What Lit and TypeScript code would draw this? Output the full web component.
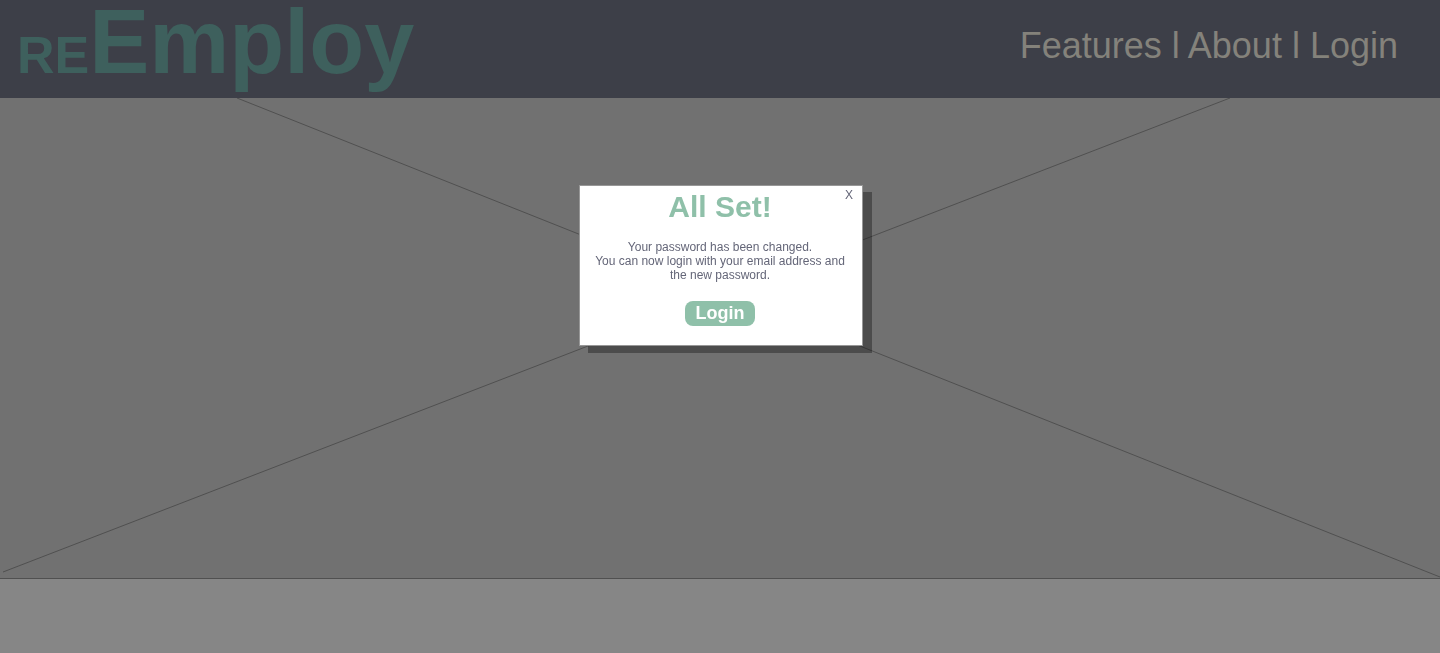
import { LitElement, html, css } from "lit";
import { customElement, state } from "lit/decorators.js";

@customElement("site-header")
class SiteHeader extends LitElement {
  static styles = css`
    :host {
      display: block;
    }
    .bar {
      display: flex;
      justify-content: space-between;
      align-items: flex-start;
      height: 98px;
      box-sizing: border-box;
      padding: 0 42px 0 17px;
      background: #3d3f48;
    }
    .logo {
      color: #3e605d;
      font-size: 90px;
      font-weight: bold;
      line-height: 84px;
      text-decoration: none;
      white-space: nowrap;
    }
    .small {
      font-size: 52px;
    }
    .nav {
      padding-top: 25px;
      color: #84827b;
      font-size: 36px;
      line-height: 42px;
      white-space: nowrap;
    }
    .nav a {
      color: inherit;
      text-decoration: none;
    }
  `;

  render() {
    return html`
      <header class="bar">
        <a class="logo" href="#home"><span class="small">RE</span>Employ</a>
        <nav class="nav">
          <a href="#features">Features</a> l <a href="#about">About</a> l
          <a href="#login">Login</a>
        </nav>
      </header>
    `;
  }
}

@customElement("confirm-dialog")
class ConfirmDialog extends LitElement {
  static styles = css`
    :host {
      position: fixed;
      inset: 0;
      display: flex;
      justify-content: center;
      align-items: flex-start;
      padding: 185px 14px 0 16px;
    }
    .card {
      position: relative;
      box-sizing: border-box;
      width: 284px;
      max-width: 100%;
      padding: 5px 15px 19px 13px;
      border: 1px solid #979797;
      background: #fff;
      box-shadow: 9px 7px 0 rgba(0, 0, 0, 0.32);
      color: #646678;
      font-size: 12px;
      line-height: 14px;
      text-align: center;
    }
    .close {
      position: absolute;
      top: 2px;
      right: 9px;
      padding: 0;
      border: 0;
      background: none;
      color: inherit;
      font: inherit;
      cursor: pointer;
    }
    .title {
      margin: 0 0 17px;
      color: #8fc0a9;
      font-size: 30px;
      line-height: 32px;
    }
    .message {
      margin: 0 0 19px;
    }
    .login {
      display: block;
      width: 70px;
      height: 25px;
      margin: 0 auto;
      padding: 0;
      border: 0;
      border-radius: 8px;
      background: #8fc0a9;
      color: #fff;
      font-family: inherit;
      font-size: 18px;
      font-weight: bold;
      cursor: pointer;
    }
  `;

  private dismiss() {
    this.dispatchEvent(new CustomEvent("dismiss"));
  }

  render() {
    return html`
      <section class="card" role="dialog" aria-modal="true" aria-labelledby="title">
        <button class="close" type="button" aria-label="Close" @click=${this.dismiss}>X</button>
        <h1 class="title" id="title">All Set!</h1>
        <p class="message">
          Your password has been changed.<br />You can now login with your email address and
          the new password.
        </p>
        <button class="login" type="button" @click=${this.dismiss}>Login</button>
      </section>
    `;
  }
}

@customElement("app-root")
class AppRoot extends LitElement {
  static styles = css`
    :host {
      display: flex;
      flex-direction: column;
      min-height: 100vh;
      background: #868686;
      font-family: "Liberation Sans", Arial, Helvetica, sans-serif;
    }
    .hero {
      height: 480px;
      border-bottom: 1px solid #505050;
      background: #717171;
    }
    .cross {
      display: block;
      width: 100%;
      height: 100%;
    }
  `;

  @state() private open = true;

  render() {
    return html`
      <site-header></site-header>
      <main class="hero">
        <svg class="cross" viewBox="0 0 1440 480" preserveAspectRatio="none" aria-hidden="true">
          <g stroke="#505050" stroke-width="1" fill="none">
            <path d="M237 0L1440 479" />
            <path d="M3 474L1230 0" />
          </g>
        </svg>
      </main>
      ${this.open
        ? html`<confirm-dialog @dismiss=${() => (this.open = false)}></confirm-dialog>`
        : null}
    `;
  }
}
